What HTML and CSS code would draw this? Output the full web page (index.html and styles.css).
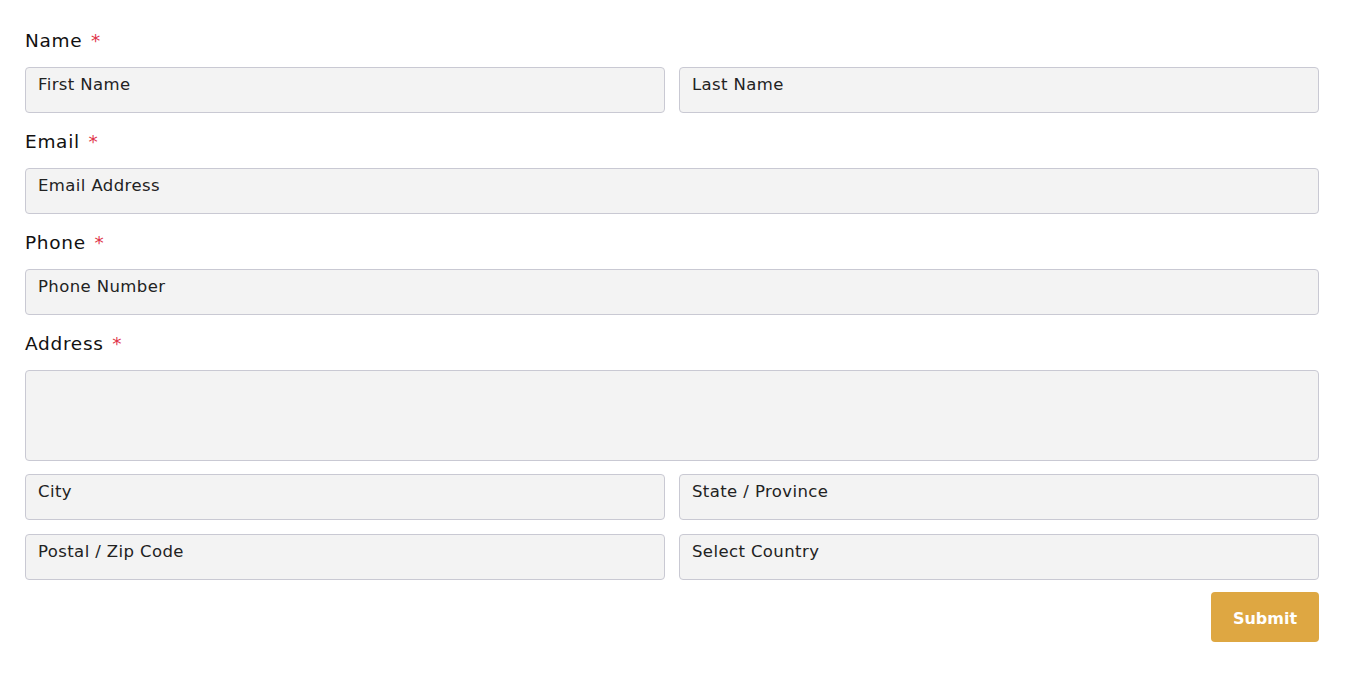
FILE: index.html
```html
<!DOCTYPE html>
<html lang="en">
<head>
<meta charset="utf-8">
<title>Form</title>
<link rel="stylesheet" href="styles.css">
</head>
<body>
<form class="form">
  <div class="group">
    <div class="label">Name <span class="req">*</span></div>
    <div class="row">
      <div class="field">First Name</div>
      <div class="field">Last Name</div>
    </div>
  </div>
  <div class="group">
    <div class="label">Email <span class="req">*</span></div>
    <div class="field">Email Address</div>
  </div>
  <div class="group">
    <div class="label">Phone <span class="req">*</span></div>
    <div class="field">Phone Number</div>
  </div>
  <div class="group address">
    <div class="label">Address <span class="req">*</span></div>
    <div class="field area"></div>
    <div class="row city-row">
      <div class="field">City</div>
      <div class="field">State / Province</div>
    </div>
    <div class="row postal-row">
      <div class="field">Postal / Zip Code</div>
      <div class="field">Select Country</div>
    </div>
  </div>
  <div class="actions">
    <button type="button" class="submit">Submit</button>
  </div>
</form>
</body>
</html>
```
FILE: styles.css
```css
html, body {
  margin: 0;
  padding: 0;
  background: #ffffff;
}
body {
  font-family: "DejaVu Sans", "Inter", sans-serif;
  color: #1a1a1a;
}
.form {
  padding: 28px 26px 0 25px;
  display: flex;
  flex-direction: column;
}
.group {
  display: flex;
  flex-direction: column;
  gap: 15px;
  margin-bottom: 16px;
}
.address {
  gap: 0;
  margin-bottom: 12px;
}
.address .label {
  margin-bottom: 14px;
}
.city-row {
  margin-top: 13px;
}
.postal-row {
  margin-top: 14px;
}
.label {
  font-size: 18.5px;
  line-height: 24px;
  letter-spacing: 0.7px;
  color: #111;
  padding-top: 1px;
  margin-bottom: -1px;
}
.req {
  color: #e0344a;
  margin-left: 2px;
}
.row {
  display: grid;
  grid-template-columns: 1fr 1fr;
  gap: 14px;
}
.field {
  box-sizing: border-box;
  height: 46px;
  background: #f3f3f3;
  border: 1px solid #c9c9d3;
  border-radius: 4px;
  padding: 6px 12px 0 12px;
  font-size: 16.5px;
  line-height: 22px;
  letter-spacing: 0.4px;
  color: #222;
}
.area {
  height: 91px;
}
.actions {
  display: flex;
  justify-content: flex-end;
}
.submit {
  width: 108px;
  height: 50px;
  border: none;
  border-radius: 4px;
  background: #dea742;
  color: #fff;
  font-family: "DejaVu Sans", sans-serif;
  font-weight: 700;
  font-size: 16px;
  padding-top: 3px;
}
```
